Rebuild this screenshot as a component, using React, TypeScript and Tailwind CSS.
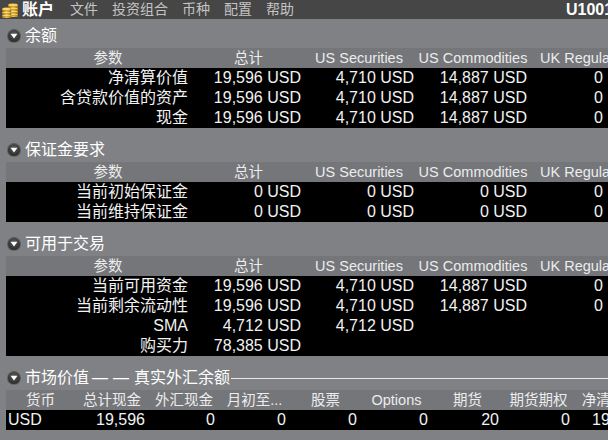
import React from "react";

const FONT = { fontFamily: '"Liberation Sans", Arial, "Noto Sans CJK SC", sans-serif' };

function Coins() {
  return (
    <svg width="18" height="17" viewBox="0 0 18 17" className="shrink-0">
      <defs>
        <linearGradient id="g" x1="0" y1="0" x2="1" y2="0">
          <stop offset="0" stopColor="#8a5a10" />
          <stop offset="0.5" stopColor="#f5c84a" />
          <stop offset="1" stopColor="#9a6a18" />
        </linearGradient>
      </defs>
      {[0, 1, 2, 3].map((i) => (
        <g key={i}>
          <rect x="7" y={12 - i * 3} width="10" height="3" fill="url(#g)" />
          <ellipse cx="12" cy={12 - i * 3} rx="5" ry="1.6" fill="#f8d66a" stroke="#a87418" strokeWidth="0.5" />
        </g>
      ))}
      {[0, 1, 2].map((i) => (
        <g key={"b" + i}>
          <rect x="1" y={13 - i * 3} width="9" height="3" fill="url(#g)" />
          <ellipse cx="5.5" cy={13 - i * 3} rx="4.5" ry="1.5" fill="#fbe07a" stroke="#a87418" strokeWidth="0.5" />
        </g>
      ))}
    </svg>
  );
}

function Toggle() {
  return (
    <span className="w-[14px] h-[14px] rounded-full bg-[radial-gradient(circle_at_50%_35%,#5a5a5a,#1e1e1e)] border border-[#9a9a9a]/40 flex items-center justify-center shrink-0">
      <svg width="8" height="6" viewBox="0 0 8 6">
        <path d="M0.5 0.8 L7.5 0.8 L4 5.5 Z" fill="#ffffff" />
      </svg>
    </span>
  );
}

function SectionTitle({ title, line, first }: { title: React.ReactNode; line?: boolean; first?: boolean }) {
  return (
    <div className={`h-[29px] flex items-end pb-[2px] pl-[7px] ${first ? "" : "mt-[5px]"}`}>
      <div className="flex items-center h-[20px] w-full">
        <Toggle />
        <span className="ml-[4px] text-[16px] leading-[20px] text-white whitespace-nowrap">{title}</span>
        {line && <span className="flex-1 h-px bg-[#e8e8e8] ml-[1px] mt-[1px]" />}
      </div>
    </div>
  );
}

type Row = string[];

function AccountTable({ rows }: { rows: Row[] }) {
  const grid = "grid grid-cols-[186px_113px_113px_113px_200px]";
  return (
    <div className="ml-[6px] w-[725px]">
      <div className={`${grid} h-[20px] bg-[#75767a] text-[14.5px] leading-[20px] text-[#ececec] whitespace-nowrap`}>
        <div className="pl-[18px] text-center">参数</div>
        <div className="text-center">总计</div>
        <div className="text-center pr-[5px]">US Securities</div>
        <div className="text-center pr-[3px]">US Commodities</div>
        <div className="pl-[9px] overflow-hidden">UK Regulated</div>
      </div>
      <div className="bg-black">
        {rows.map((r, i) => (
          <div key={i} className={`${grid} h-[20px] text-[16px] leading-[20px] text-[#f2f2f2] whitespace-nowrap`}>
            <div className="text-right pr-[4px]">{r[0]}</div>
            <div className="text-right pr-[4px]">{r[1]}</div>
            <div className="text-right pr-[4px]">{r[2]}</div>
            <div className="text-right pr-[4px]">{r[3]}</div>
            <div className="w-[76px] text-right pr-[4px]">{r[4]}</div>
          </div>
        ))}
      </div>
    </div>
  );
}

function FxTable() {
  const grid = "grid grid-cols-[69px_74px_70px_71px_71px_71px_71px_71px_71px]";
  const heads = ["货币", "总计现金", "外汇现金", "月初至...", "股票", "Options", "期货", "期货期权", "净清算..."];
  const vals = ["19,596", "0", "0", "0", "0", "20", "0", "19,596"];
  return (
    <div className="ml-[6px] w-[700px]">
      <div className={`${grid} h-[20px] bg-[#75767a] text-[14.5px] leading-[20px] text-[#ececec] whitespace-nowrap`}>
        {heads.map((h, i) => (
          <div key={i} className="text-center">{h}</div>
        ))}
      </div>
      <div className={`${grid} h-[20px] bg-black text-[16px] leading-[20px] text-[#f2f2f2] whitespace-nowrap`}>
        <div className="pl-[2px]">USD</div>
        {vals.map((v, i) => (
          <div key={i} className="text-right pr-[4px]">{v}</div>
        ))}
      </div>
    </div>
  );
}

export default function App() {
  return (
    <div style={FONT} className="w-[608px] h-[440px] overflow-hidden bg-[#808184]">
      <div className="h-[19px] bg-[#464646] flex items-center whitespace-nowrap overflow-hidden">
        <span className="ml-[1px] mt-[1px]"><Coins /></span>
        <span className="ml-[3px] text-[16px] font-bold text-white leading-[19px]">账户</span>
        <div className="flex gap-[14px] ml-[16px] text-[14px] text-[#c4c4c4] leading-[19px]">
          <span>文件</span>
          <span>投资组合</span>
          <span>币种</span>
          <span>配置</span>
          <span>帮助</span>
        </div>
        <span className="ml-[272px] text-[16px] font-bold text-white leading-[19px]">U1001234</span>
      </div>

      <SectionTitle title="余额" first />
      <AccountTable
        rows={[
          ["净清算价值", "19,596 USD", "4,710 USD", "14,887 USD", "0"],
          ["含贷款价值的资产", "19,596 USD", "4,710 USD", "14,887 USD", "0"],
          ["现金", "19,596 USD", "4,710 USD", "14,887 USD", "0"],
        ]}
      />

      <SectionTitle title="保证金要求" />
      <AccountTable
        rows={[
          ["当前初始保证金", "0 USD", "0 USD", "0 USD", "0"],
          ["当前维持保证金", "0 USD", "0 USD", "0 USD", "0"],
        ]}
      />

      <SectionTitle title="可用于交易" />
      <AccountTable
        rows={[
          ["当前可用资金", "19,596 USD", "4,710 USD", "14,887 USD", "0"],
          ["当前剩余流动性", "19,596 USD", "4,710 USD", "14,887 USD", "0"],
          ["SMA", "4,712 USD", "4,712 USD", "", ""],
          ["购买力", "78,385 USD", "", "", ""],
        ]}
      />

      <SectionTitle
        title={
          <>
            市场价值<span className="pl-[3px] pr-[0px] tracking-[5px]">——</span>真实外汇余额
          </>
        }
        line
      />
      <FxTable />
    </div>
  );
}
